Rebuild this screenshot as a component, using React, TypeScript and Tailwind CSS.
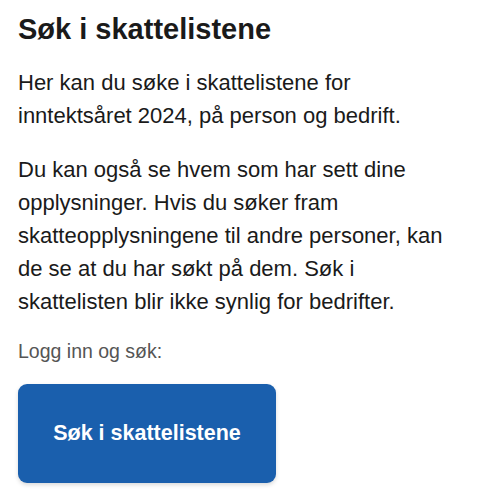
export default function App() {
  return (
    <div className="min-h-screen bg-white px-[18px] pt-[11px] font-['Liberation_Sans',Arial,sans-serif] text-[#1a1a1a]">
      <h1 className="text-[29px] font-bold leading-[36px]">Søk i skattelistene</h1>
      <p className="mt-[19px] text-[22px] leading-[33px]">
        Her kan du søke i skattelistene for inntektsåret 2024, på person og bedrift.
      </p>
      <p className="mt-[21px] text-[22px] leading-[33px]">
        Du kan også se hvem som har sett dine opplysninger. Hvis du søker fram
        skatteopplysningene til andre personer, kan de se at du har søkt på dem.
        Søk i skattelisten blir ikke synlig for bedrifter.
      </p>
      <p className="mt-[19px] text-[19.5px] leading-[28px] text-[#555]">Logg inn og søk:</p>
      <button
        type="button"
        className="mt-[19px] flex h-[99px] w-[258px] items-center justify-center rounded-[9px] bg-[#1a5fad] text-[21.5px] font-bold text-white shadow-[0_2px_4px_rgba(0,0,0,0.15)]"
      >
        Søk i skattelistene
      </button>
    </div>
  );
}
